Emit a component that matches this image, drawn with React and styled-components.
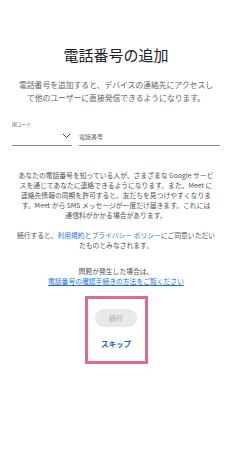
import React from "react";
import styled, { createGlobalStyle } from "styled-components";

const GlobalStyle = createGlobalStyle`
  html, body {
    margin: 0;
    padding: 0;
    background: #fff;
  }
  body {
    font-family: "Noto Sans CJK JP", "Noto Sans", sans-serif;
    color: #3c4043;
  }
`;

const Page = styled.main`
  width: 232px;
  min-height: 472px;
  box-sizing: border-box;
  padding-top: 44px;
  display: flex;
  flex-direction: column;
  align-items: center;
`;

const Title = styled.h1`
  margin: 0;
  font-size: 15px;
  font-weight: 400;
  line-height: 22px;
  color: #202124;
`;

const Lead = styled.p`
  margin: 12px 0 0;
  font-size: 7.8px;
  line-height: 13px;
  text-align: center;
  color: #5f6368;
  white-space: nowrap;
`;

const Fields = styled.div`
  align-self: stretch;
  margin: 17px 12px 0;
  display: flex;
  gap: 7px;
`;

const Field = styled.div`
  flex: ${(p) => (p.$grow ? 1 : "0 0 60px")};
  display: flex;
  flex-direction: column;
  border-bottom: 1px solid #80868b;
`;

const Label = styled.span`
  font-size: 4.8px;
  line-height: 6px;
  color: #5f6368;
  height: 6px;
`;

const Input = styled.div`
  height: 18px;
  display: flex;
  align-items: center;
  justify-content: ${(p) => (p.$end ? "flex-end" : "flex-start")};
  font-size: 6px;
  color: #5f6368;
  padding-right: ${(p) => (p.$end ? "1px" : "0")};
`;

const Body = styled.p`
  margin: ${(p) => p.$top}px 0 0;
  font-size: 6.8px;
  line-height: 10px;
  text-align: center;
  color: #505357;
  white-space: nowrap;
`;

const Link = styled.a`
  color: #1a73e8;
  text-decoration: ${(p) => (p.$underline ? "underline" : "none")};
  text-underline-offset: 1px;
`;

const Highlight = styled.div`
  margin-top: 10px;
  width: 63px;
  height: 68px;
  box-sizing: border-box;
  border: 3px solid #e5698a;
  display: flex;
  flex-direction: column;
  align-items: center;
  padding-top: 10px;
  gap: 11px;
`;

const NextButton = styled.button`
  width: 42px;
  height: 18px;
  border: none;
  border-radius: 9px;
  background: #e8e8e8;
  color: #a8a8a8;
  font-family: inherit;
  font-size: 7px;
  padding: 0;
`;

const Skip = styled.button`
  border: none;
  background: none;
  padding: 0;
  font-family: inherit;
  font-size: 7.5px;
  font-weight: 700;
  color: #1967d2;
`;

export default function App() {
  return (
    <>
      <GlobalStyle />
      <Page>
        <Title>電話番号の追加</Title>
        <Lead>
          電話番号を追加すると、デバイスの連絡先にアクセスし
          <br />
          て他のユーザーに直接発信できるようになります。
        </Lead>

        <Fields>
          <Field>
            <Label>国コード</Label>
            <Input $end>
              <svg width="9" height="6" viewBox="0 0 9 6">
                <path d="M0.8 0.8 L4.5 4.6 L8.2 0.8" fill="none" stroke="#3c4043" strokeWidth="1" />
              </svg>
            </Input>
          </Field>
          <Field $grow>
            <Label />
            <Input>電話番号</Input>
          </Field>
        </Fields>

        <Body $top={24}>
          あなたの電話番号を知っている人が、さまざまな Google サービ
          <br />
          スを通じてあなたに連絡できるようになります。また、Meet に
          <br />
          連絡先情報の同期を許可すると、友だちを見つけやすくなりま
          <br />
          す。Meet から SMS メッセージが一度だけ届きます。これには
          <br />
          通信料がかかる場合があります。
        </Body>

        <Body $top={10}>
          続行すると、<Link href="#">利用規約</Link>と
          <Link href="#">プライバシー ポリシー</Link>にご同意いただい
          <br />
          たものとみなされます。
        </Body>

        <Body $top={16}>
          問題が発生した場合は、
          <br />
          <Link href="#" $underline>電話番号の確認手続きの方法をご覧ください</Link>
        </Body>

        <Highlight>
          <NextButton disabled>続行</NextButton>
          <Skip>スキップ</Skip>
        </Highlight>
      </Page>
    </>
  );
}
